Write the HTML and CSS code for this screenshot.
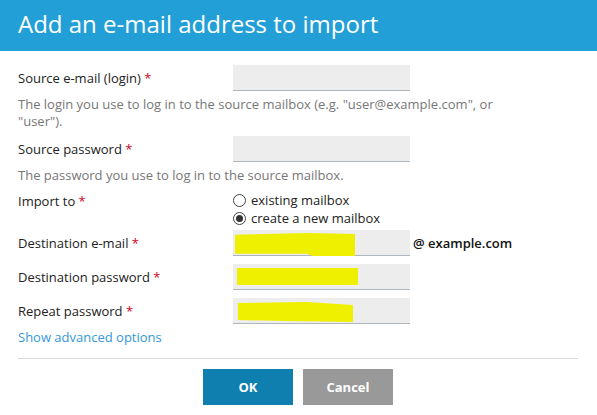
FILE: index.html
```
<!DOCTYPE html>
<html>
<head>
<meta charset="utf-8">
<link rel="stylesheet" href="styles.css">
</head>
<body>
<div class="header">Add an e-mail address to import</div>
<div class="form">
  <div class="row r1">
    <div class="label">Source e-mail (login) <span class="req">*</span></div>
    <div class="field"></div>
  </div>
  <div class="hint">The login you use to log in to the source mailbox (e.g. "user@example.com", or "user").</div>
  <div class="row r2">
    <div class="label">Source password <span class="req">*</span></div>
    <div class="field"></div>
  </div>
  <div class="hint">The password you use to log in to the source mailbox.</div>
  <div class="row r3 top">
    <div class="label">Import to <span class="req">*</span></div>
    <div class="radios">
      <div class="radio"><span class="dot"></span>existing mailbox</div>
      <div class="radio"><span class="dot on"></span>create a new mailbox</div>
    </div>
  </div>
  <div class="row r4">
    <div class="label">Destination e-mail <span class="req">*</span></div>
    <div class="field"><div class="mark m1"></div></div>
    <div class="suffix">@ example.com</div>
  </div>
  <div class="row r5">
    <div class="label">Destination password <span class="req">*</span></div>
    <div class="field"><div class="mark m2"></div></div>
  </div>
  <div class="row r5">
    <div class="label">Repeat password <span class="req">*</span></div>
    <div class="field"><div class="mark m3"></div></div>
  </div>
  <a class="link" href="#">Show advanced options</a>
  <div class="sep"></div>
  <div class="buttons">
    <button class="btn ok">OK</button>
    <button class="btn cancel">Cancel</button>
  </div>
</div>
</body>
</html>
```
FILE: styles.css
```
* { box-sizing: border-box; }
body {
  margin: 0;
  font-family: "Open Sans", "DejaVu Sans", sans-serif;
  font-size: 13px;
  color: #222;
  background: #fff;
}
.header {
  height: 51px;
  background: #229fd6;
  color: #fff;
  font-size: 24px;
  line-height: 48px;
  padding-left: 18px;
}
.form {
  padding: 0 19px 0 18px;
  display: flex;
  flex-direction: column;
}
.row {
  display: flex;
  align-items: center;
}
.row.top { align-items: flex-start; }
.label {
  width: 215px;
  flex: none;
  line-height: 17px;
}
.req { color: #d0021b; }
.field {
  width: 177px;
  height: 26px;
  background: #ededed;
  border-bottom: 1px solid #adb6bd;
  position: relative;
  flex: none;
}
.r1 { margin-top: 14px; }
.r2 { margin-top: 6px; }
.r3 { margin-top: 7px; }
.r3 .label { margin-top: 2px; }
.r4 { margin-top: 3px; }
.r5 { margin-top: 8px; }
.hint {
  margin-top: 5px;
  color: #777;
  line-height: 17px;
  width: 500px;
}
.radios { display: flex; flex-direction: column; }
.radio {
  display: flex;
  align-items: center;
  line-height: 18px;
  height: 18px;
}
.dot {
  width: 13px;
  height: 13px;
  border: 1px solid #444;
  border-radius: 50%;
  margin-right: 5px;
  display: flex;
  align-items: center;
  justify-content: center;
}
.dot.on::after {
  content: "";
  width: 7px;
  height: 7px;
  border-radius: 50%;
  background: #333;
}
.suffix {
  margin-left: 3px;
  font-weight: 600;
  color: #111;
}
.mark {
  position: absolute;
  background: #efef00;
}
.m1 { left: 2px; top: 3px; width: 120px; height: 23px; clip-path: polygon(0 8%, 60% 0, 100% 4%, 100% 100%, 65% 100%, 60% 90%, 0 90%); }
.m2 { left: 4px; top: 4px; width: 121px; height: 17px; }
.m3 { left: 5px; top: 4px; width: 115px; height: 20px; clip-path: polygon(0 5%, 60% 0, 100% 15%, 100% 100%, 40% 95%, 0 90%); }
.link {
  margin-top: 5px;
  color: #3597d9;
  text-decoration: none;
  line-height: 17px;
  align-self: flex-start;
}
.sep {
  margin-top: 12px;
  height: 1px;
  background: #d9d9d9;
}
.buttons {
  display: flex;
  justify-content: center;
  gap: 10px;
  margin-top: 10px;
}
.btn {
  width: 90px;
  height: 36px;
  border: 0;
  color: #fff;
  font-family: "Open Sans", "DejaVu Sans", sans-serif;
  font-weight: 700;
  font-size: 13px;
}
.ok { background: #0f7fb0; }
.cancel { background: #999; }
```
